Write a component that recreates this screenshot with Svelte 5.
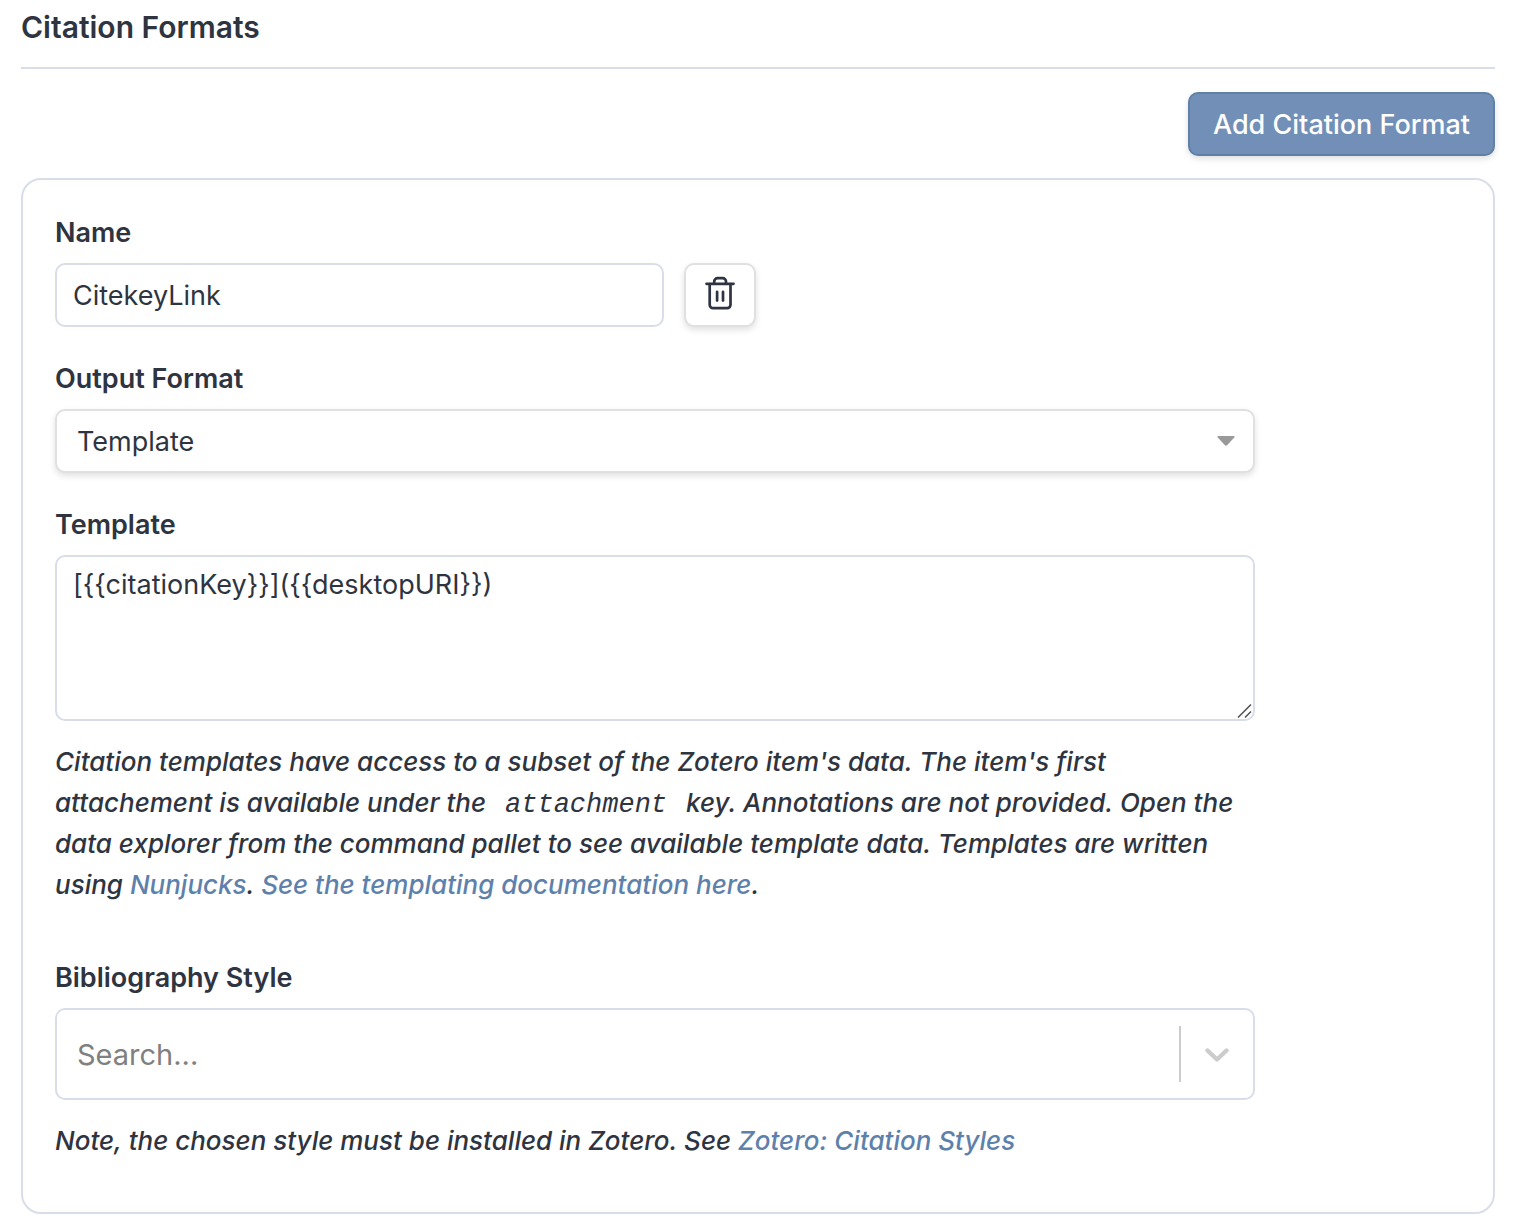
<script>
  let name = $state('CitekeyLink');
  let format = $state('template');
  let template = $state('[{{citationKey}}]({{desktopURI}})');
  let search = $state('');
</script>

<main class="settings">
  <h2 class="heading">Citation Formats</h2>

  <div class="toolbar">
    <button class="button primary" type="button">Add Citation Format</button>
  </div>

  <section class="card">
    <div class="field">
      <label class="label" for="name">Name</label>
      <div class="row">
        <input id="name" class="control text" type="text" bind:value={name} />
        <button class="button delete" type="button" aria-label="Delete format">
          <svg class="trash" viewBox="0 0 32 40" aria-hidden="true">
            <path d="M2.5 8.8H29.5" />
            <path d="M10.2 8.5V6.6a3.4 3.4 0 0 1 3.4-3.4h5a3.4 3.4 0 0 1 3.4 3.4v1.9" />
            <path d="M5.7 9v20.8a3.4 3.4 0 0 0 3.4 3.4h14a3.4 3.4 0 0 0 3.4-3.4V9" />
            <path d="M13.1 16.8v8.800M19 16.8v8.800" />
          </svg>
        </button>
      </div>
    </div>

    <div class="field">
      <label class="label" for="format">Output Format</label>
      <div class="layered">
        <select id="format" class="control dropdown" bind:value={format}>
          <option value="template">Template</option>
          <option value="citation">Formatted Citation</option>
          <option value="bibliography">Formatted Bibliography</option>
        </select>
        <svg class="caret" viewBox="0 0 18 10" aria-hidden="true">
          <path d="M1 0h16q1 .6 .3 1.6l-7 7.400q-1.300 1.300-2.600 0l-7-7.400Q0 .6 1 0z" />
        </svg>
      </div>
    </div>

    <div class="field">
      <label class="label" for="template">Template</label>
      <div class="layered">
        <textarea id="template" class="control area" bind:value={template}></textarea>
        <svg class="grip" viewBox="0 0 16 16" aria-hidden="true">
          <path d="M1 14.500L14 1.500M8 14.500L14 8.500" />
        </svg>
      </div>
      <p class="help">
        Citation templates have access to a subset of the Zotero item's data. The item's first
        attachement is available under the <code>attachment</code> key. Annotations are not
        provided. Open the data explorer from the command pallet to see available template data.
        Templates are written using <a href="#nunjucks">Nunjucks</a>.
        <a href="#templating">See the templating documentation here</a>.
      </p>
    </div>

    <div class="field bibliography">
      <label class="label" for="style">Bibliography Style</label>
      <div class="control combo">
        <input id="style" class="search" type="text" placeholder="Search..." bind:value={search} />
        <span class="separator"></span>
        <button class="toggle" type="button" aria-label="Show styles">
          <svg class="chevron" viewBox="0 0 24 16" aria-hidden="true">
            <path d="M2.500 4.500L12 13.500L21.500 4.500" />
          </svg>
        </button>
      </div>
      <p class="help">
        Note, the chosen style must be installed in Zotero. See
        <a href="#styles">Zotero: Citation Styles</a>
      </p>
    </div>
  </section>
</main>

<style>
  :global(body) {
    background: #fff;
  }

  .settings,
  .settings * {
    box-sizing: border-box;
  }

  .settings {
    padding: 9px 19px 14px 21px;
    color: #2e3440;
    font-family: Inter, "Liberation Sans", sans-serif;
    font-size: 27px;
  }

  .heading {
    margin: 0;
    padding-bottom: 22px;
    border-bottom: 2px solid #d8dee9;
    font-size: 30px;
    font-weight: 600;
    line-height: 36px;
  }

  .toolbar {
    display: flex;
    justify-content: flex-end;
    padding: 23px 0 22px;
  }

  .button {
    border: 2px solid #e0e0e0;
    border-radius: 10px;
    background: #fff;
    color: inherit;
    font: inherit;
    box-shadow: 0 3px 6px rgba(0, 0, 0, 0.12);
    cursor: pointer;
  }

  .primary {
    height: 64px;
    padding: 0 23px;
    border-color: #6180a6;
    background: #7290b7;
    color: #fff;
    font-weight: 500;
  }

  .card {
    display: flex;
    flex-direction: column;
    gap: 35px;
    padding: 36px 32px 51px;
    border: 2px solid #d8dee9;
    border-radius: 20px;
  }

  .field {
    width: 100%;
    max-width: 1200px;
  }

  .bibliography {
    margin-top: 21px;
  }

  .label {
    display: block;
    margin-bottom: 13px;
    font-weight: 600;
    line-height: 34px;
  }

  .row {
    display: flex;
    gap: 20px;
  }

  .control {
    display: block;
    width: 100%;
    border: 2px solid #d8dee9;
    border-radius: 10px;
    background: #fff;
    color: inherit;
    font: inherit;
  }

  .text {
    height: 64px;
    max-width: 609px;
    padding: 0 16px;
  }

  .delete {
    display: grid;
    place-items: center;
    width: 72px;
    height: 64px;
    padding: 0;
  }

  .trash {
    width: 32px;
    height: 40px;
    fill: none;
    stroke: #2e3440;
    stroke-width: 2.7;
    stroke-linecap: round;
    stroke-linejoin: round;
  }

  .layered {
    position: relative;
  }

  .dropdown {
    height: 64px;
    padding: 0 56px 0 20px;
    border-color: #e0e0e0;
    box-shadow: 0 3px 6px rgba(0, 0, 0, 0.12);
    appearance: none;
  }

  .caret {
    position: absolute;
    top: 27px;
    right: 20px;
    width: 18px;
    height: 10px;
    fill: #999;
    pointer-events: none;
  }

  .area {
    height: 166px;
    padding: 10px 16px;
    line-height: 36px;
    resize: vertical;
  }

  .area::-webkit-resizer {
    display: none;
  }

  .grip {
    position: absolute;
    right: 2px;
    bottom: 2px;
    width: 16px;
    height: 16px;
    fill: none;
    stroke: #555;
    stroke-width: 1.6;
    pointer-events: none;
  }

  .help {
    margin: 20px 0 0;
    font-size: 26px;
    font-style: italic;
    font-weight: 500;
    line-height: 41px;
  }

  .help a {
    color: #5e81ac;
    text-decoration: none;
  }

  .help code {
    padding: 0 12px;
    font-family: "Liberation Mono", monospace;
    font-size: 27px;
    font-weight: 400;
    line-height: 1;
  }

  .combo {
    display: flex;
    align-items: center;
    height: 92px;
  }

  .search {
    flex: 1;
    min-width: 0;
    height: 100%;
    padding: 0 20px;
    border: 0;
    border-radius: 8px;
    background: none;
    color: inherit;
    font: inherit;
    font-size: 29px;
  }

  .search::placeholder {
    color: #808080;
    opacity: 1;
  }

  .separator {
    width: 2px;
    height: 56px;
    background: #ccc;
  }

  .toggle {
    display: grid;
    place-items: center;
    width: 72px;
    height: 100%;
    padding: 0;
    border: 0;
    background: none;
  }

  .chevron {
    width: 24px;
    height: 16px;
    fill: none;
    stroke: #ccc;
    stroke-width: 4.4;
    stroke-linecap: round;
    stroke-linejoin: round;
  }
</style>
